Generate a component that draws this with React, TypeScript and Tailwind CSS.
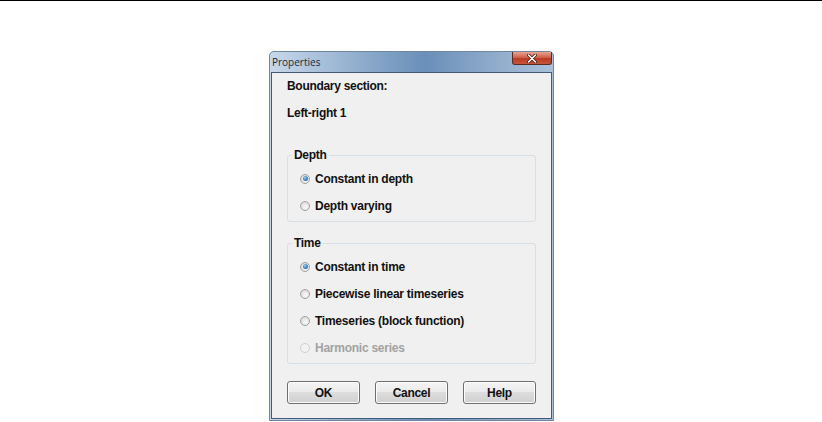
import React from 'react';

type Option = { label: string; checked?: boolean; disabled?: boolean };

const depthOptions: Option[] = [
  { label: 'Constant in depth', checked: true },
  { label: 'Depth varying' },
];

const timeOptions: Option[] = [
  { label: 'Constant in time', checked: true },
  { label: 'Piecewise linear timeseries' },
  { label: 'Timeseries (block function)' },
  { label: 'Harmonic series', disabled: true },
];

function Radio({ checked, disabled }: { checked?: boolean; disabled?: boolean }) {
  return (
    <span
      className={`flex h-[10px] w-[10px] shrink-0 items-center justify-center rounded-full border ${
        disabled
          ? 'border-[#cfcfcf] bg-[#f2f2f2]'
          : 'border-[#a0a0a0] bg-[radial-gradient(circle_at_60%_65%,#fafafa,#d2d2d2)]'
      }`}
    >
      {checked && (
        <span className="h-[5px] w-[5px] rounded-full bg-[radial-gradient(circle_at_40%_35%,#9ccdf4,#2c6cb0_70%,#1a4f8a)]" />
      )}
    </span>
  );
}

function GroupBox({ title, options }: { title: string; options: Option[] }) {
  return (
    <fieldset className="rounded-[3px] border border-[#d5dfe5] px-0 pt-[3px] pb-[2px]">
      <legend className="ml-[4px] px-[2px] text-[12px] leading-[14px] font-bold tracking-[-0.3px] text-[#111]">{title}</legend>
      {options.map((o) => (
        <div key={o.label} className="flex h-[27px] items-center gap-[5px] pl-[12px]">
          <Radio checked={o.checked} disabled={o.disabled} />
          <span
            className={`text-[12px] leading-[14px] font-bold tracking-[-0.25px] ${o.disabled ? 'text-[#a2a2a2]' : 'text-[#111]'}`}
          >
            {o.label}
          </span>
        </div>
      ))}
    </fieldset>
  );
}

function Button({ label }: { label: string }) {
  return (
    <button className="flex h-[23px] w-[73px] items-center justify-center rounded-[3px] border border-[#707070] bg-[linear-gradient(#f4f4f4,#ebebeb_45%,#dddddd_50%,#d0d0d0)] text-[12px] font-bold tracking-[-0.3px] text-[#111] shadow-[inset_0_0_0_1px_#fcfcfc]">
      {label}
    </button>
  );
}

export default function App() {
  return (
    <div
      className="h-[422px] w-[822px] overflow-hidden bg-white"
      style={{ fontFamily: '"Liberation Sans", Arial, sans-serif' }}
    >
      <div className="h-px w-full bg-black" />

      {/* Dialog window */}
      <div className="mt-[50px] ml-[269px] flex h-[370px] w-[285px] flex-col rounded-t-[5px] border border-[#6f86a0] bg-[linear-gradient(90deg,#c9d8e9_0%,#a8c0da_18%,#7d9fc4_42%,#6a8fb9_55%,#8eaacb_78%,#a9c0d9_100%)]">
        {/* Title bar */}
        <div className="flex h-[20px] shrink-0 items-start justify-between">
          <span className="mt-[4px] ml-[2px] text-[10px] leading-[12px] text-[#1c2a3a]" style={{ fontFamily: '"Open Sans", "Liberation Sans", sans-serif' }}>
            Properties
          </span>
          <div className="mr-[1px] flex h-[13px] w-[40px] items-center justify-center rounded-b-[3px] border border-t-0 border-[#5c2a22] bg-[linear-gradient(#e8a493,#d0624b_45%,#b83a24_55%,#c8553c)]">
            <svg width="10" height="9" viewBox="0 0 10 9">
              <path d="M1.5 1 L8.5 8 M8.5 1 L1.5 8" stroke="#3a1a14" strokeWidth="3" strokeLinecap="round" />
              <path d="M1.5 1 L8.5 8 M8.5 1 L1.5 8" stroke="#ffffff" strokeWidth="1.6" strokeLinecap="round" />
            </svg>
          </div>
        </div>

        {/* Client area */}
        <div className="mx-[1px] mb-[1px] flex flex-1 flex-col border border-[#43597a] bg-[#f0f0f0] px-[15px] pt-[6px]">
          <div className="text-[12px] leading-[14px] font-bold tracking-[-0.3px] text-[#111]">Boundary section:</div>
          <div className="mt-[13px] text-[12px] leading-[14px] font-bold tracking-[-0.3px] text-[#111]">Left-right 1</div>

          <div className="mt-[28px]">
            <GroupBox title="Depth" options={depthOptions} />
          </div>
          <div className="mt-[14px]">
            <GroupBox title="Time" options={timeOptions} />
          </div>

          <div className="mt-[17px] flex justify-between">
            <Button label="OK" />
            <Button label="Cancel" />
            <Button label="Help" />
          </div>
        </div>
      </div>
    </div>
  );
}
